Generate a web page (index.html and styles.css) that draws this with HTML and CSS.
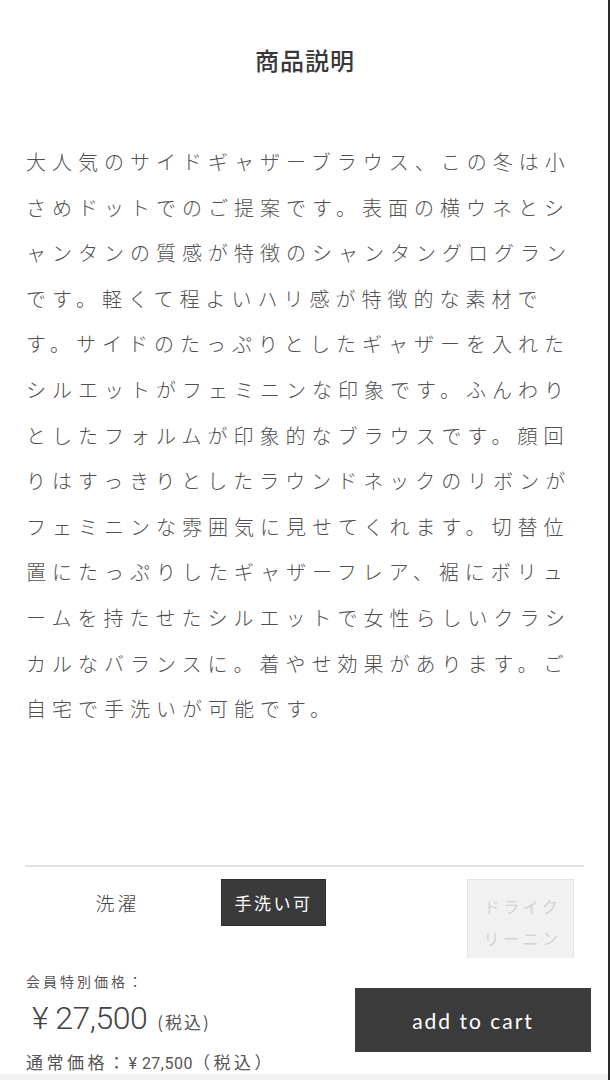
FILE: index.html
```html
<!DOCTYPE html>
<html lang="ja">
<head>
<meta charset="utf-8">
<title>商品説明</title>
<link rel="stylesheet" href="styles.css">
</head>
<body>
<main class="page">
  <section class="desc">
    <h2 class="desc-title">商品説明</h2>
    <p class="desc-text">大人気のサイドギャザーブラウス、この冬は小さめドットでのご提案です。表面の横ウネとシャンタンの質感が特徴のシャンタングログランです。軽くて程よいハリ感が特徴的な素材です。サイドのたっぷりとしたギャザーを入れたシルエットがフェミニンな印象です。ふんわりとしたフォルムが印象的なブラウスです。顔回りはすっきりとしたラウンドネックのリボンがフェミニンな雰囲気に見せてくれます。切替位置にたっぷりしたギャザーフレア、裾にボリュームを持たせたシルエットで女性らしいクラシカルなバランスに。着やせ効果があります。ご自宅で手洗いが可能です。</p>
  </section>
  <hr class="divider">
  <section class="care">
    <div class="care-label">洗濯</div>
    <div class="care-tag on">手洗い可</div>
    <div class="care-tag off">ドライクリーニング</div>
  </section>
</main>
<div class="edge"></div>
<footer class="buybar">
  <div class="prices">
    <div class="member-label">会員特別価格：</div>
    <div class="member-price"><span class="yen">¥ 27,500</span><span class="tax">(税込)</span></div>
    <div class="regular">通常価格：<span class="reg-num">¥ 27,500</span>（税込）</div>
  </div>
  <button class="cart-btn" type="button">add to cart</button>
</footer>
</body>
</html>
```
FILE: styles.css
```css
html, body {
  margin: 0;
  padding: 0;
  background: #fff;
}
body {
  font-family: "Noto Sans CJK JP", "Noto Sans", sans-serif;
  color: #444;
  width: 610px;
  height: 1080px;
  overflow: hidden;
}
.page {
  padding-top: 44px;
}
.desc-title {
  margin: 0;
  text-align: center;
  font-size: 24px;
  line-height: 32px;
  font-weight: 500;
  color: #383838;
  letter-spacing: 1px;
}
.desc-text {
  margin: 63px 0 0 26px;
  width: 556px;
  font-size: 20px;
  font-weight: 300;
  line-height: 45.6px;
  letter-spacing: 6px;
  color: #505050;
  line-break: normal;
}
.divider {
  margin: 133px 26px 0 25px;
  border: 0;
  height: 2px;
  background: #e2e2e2;
}
.care {
  display: flex;
  align-items: flex-start;
  margin: 12px 36px 0 25px;
}
.care-label {
  width: 185px;
  text-align: center;
  font-size: 19px;
  font-weight: 300;
  line-height: 47px;
  letter-spacing: 3px;
  color: #444;
}
.care-tag {
  box-sizing: border-box;
  text-align: center;
  font-size: 17px;
  letter-spacing: 2.5px;
  margin-left: 11px;
}
.care-tag.on {
  width: 105px;
  height: 47px;
  line-height: 45px;
  background: #3a3a3a;
  color: #fff;
  border: 1px solid #2e2e2e;
}
.care-tag.off {
  margin-left: auto;
  width: 107px;
  padding: 10px 10px 0 14px;
  font-size: 16px;
  letter-spacing: 3.5px;
  line-height: 32px;
  background: #f1f1f1;
  border: 1px solid #e4e4e4;
  color: #d2d2d2;
}
.edge {
  position: fixed;
  top: 0;
  right: 0;
  width: 2px;
  height: 100%;
  background: #2a2a2a;
}
.buybar {
  position: fixed;
  left: 0;
  bottom: 0;
  width: 608px;
  height: 122px;
  background: #fff;
  display: flex;
  justify-content: space-between;
  align-items: flex-start;
}
.buybar::after {
  content: "";
  position: absolute;
  left: 0;
  right: 0;
  bottom: 0;
  height: 6px;
  background: #f2f2f2;
}
.prices {
  padding: 13px 0 0 26px;
  color: #555;
}
.member-label {
  font-size: 14px;
  line-height: 20px;
  letter-spacing: 3px;
}
.member-price {
  margin-top: 6px;
  line-height: 42px;
  white-space: nowrap;
}
.yen {
  margin-left: 6px;
  font-family: "Roboto", "Liberation Sans", sans-serif;
  font-weight: 300;
  font-size: 32px;
  letter-spacing: -0.5px;
  color: #444;
}
.tax {
  margin-left: 10px;
  font-size: 17px;
  letter-spacing: 2px;
  color: #555;
}
.regular {
  margin-top: 7px;
  font-size: 17px;
  line-height: 24px;
  letter-spacing: 3.5px;
  white-space: nowrap;
}
.reg-num {
  font-family: "Roboto", "Liberation Sans", sans-serif;
  font-size: 16px;
  letter-spacing: 0.5px;
}
.cart-btn {
  margin: 30px 17px 0 0;
  width: 236px;
  height: 64px;
  border: 0;
  background: #3b3b3b;
  color: #fff;
  font-family: "Lato", "Noto Sans", sans-serif;
  font-size: 21px;
  letter-spacing: 2px;
  cursor: pointer;
}
```
